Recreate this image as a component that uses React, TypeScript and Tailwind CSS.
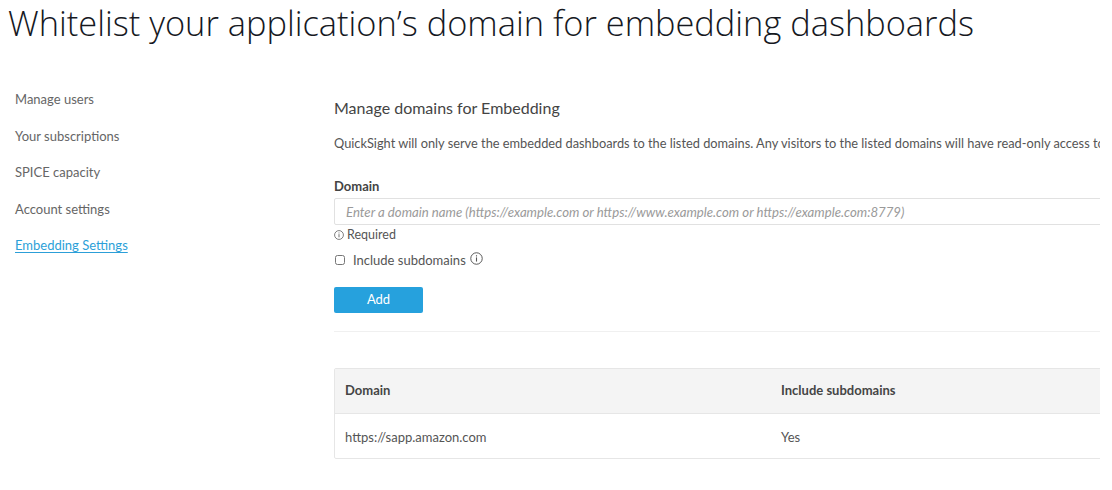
import { useState } from "react";

const navItems = [
  "Manage users",
  "Your subscriptions",
  "SPICE capacity",
  "Account settings",
  "Embedding Settings",
];

const domains = [{ domain: "https://sapp.amazon.com", subdomains: "Yes" }];

function InfoIcon({ size = 11 }: { size?: number }) {
  return (
    <svg width={size} height={size} viewBox="0 0 12 12" fill="none" className="shrink-0">
      <circle cx="6" cy="6" r="5.3" stroke="currentColor" strokeWidth="0.9" />
      <rect x="5.5" y="5" width="1" height="3.8" fill="currentColor" />
      <rect x="5.5" y="3" width="1" height="1.1" fill="currentColor" />
    </svg>
  );
}

export default function App() {
  const [value, setValue] = useState("");
  const [includeSub, setIncludeSub] = useState(false);

  return (
    <div className="w-[1112px] h-[490px] overflow-hidden bg-white font-['Lato',sans-serif] text-[#545b64]">
      <h1 className="pl-[8px] text-[34.4px] leading-[46px] font-light text-[#16191f] font-['Open_Sans',sans-serif]">
        Whitelist your application’s domain for embedding dashboards
      </h1>

      <div className="flex w-[1100px] overflow-hidden">
        <nav className="w-[334px] shrink-0 pl-[15px] pt-[44px] flex flex-col gap-[18px]">
          {navItems.map((item) => {
            const active = item === "Embedding Settings";
            return (
              <a
                key={item}
                href="#"
                className={
                  "text-[13px] leading-[18.5px] w-fit " +
                  (active ? "text-[#2c9fd8] underline underline-offset-2" : "text-[#666]")
                }
              >
                {item}
              </a>
            );
          })}
        </nav>

        <main className="w-[800px] shrink-0 pt-[51px]">
          <h2 className="text-[16px] leading-[22px] text-[#444]">Manage domains for Embedding</h2>
          <p className="mt-[15px] text-[12.8px] leading-[18px] whitespace-nowrap text-[#555]">
            QuickSight will only serve the embedded dashboards to the listed domains. Any visitors to the listed domains will have read-only access to all dashboards.
          </p>

          <label className="block mt-[25px] text-[13px] leading-[18px] font-bold text-[#444]">Domain</label>
          <input
            value={value}
            onChange={(e) => setValue(e.target.value)}
            placeholder="Enter a domain name (https://example.com or https://www.example.com or https://example.com:8779)"
            className="mt-[3px] block w-[800px] h-[27px] border border-[#e1e1e1] rounded-[2px] px-[11px] text-[13.2px] italic text-[#444] placeholder:text-[#9a9a9a] outline-none"
          />
          <div className="mt-[1px] flex items-center gap-[3px] text-[12.5px] leading-[17px] text-[#555]">
            <InfoIcon size={10} />
            <span>Required</span>
          </div>

          <label className="mt-[8px] flex items-center text-[13px] leading-[18px] text-[#555]">
            <input
              type="checkbox"
              checked={includeSub}
              onChange={(e) => setIncludeSub(e.target.checked)}
              className="ml-[1px] w-[10px] h-[10px] accent-[#2c9fd8]"
            />
            <span className="ml-[8px]">Include subdomains</span>
            <span className="ml-[4px] -mt-[4px]">
              <InfoIcon size={13} />
            </span>
          </label>

          <button className="mt-[18px] w-[89px] h-[26px] rounded-[2px] bg-[#26a1dd] text-white text-[13px]">
            Add
          </button>

          <div className="mt-[18px] h-px bg-[#f0f0f0]" />

          <div className="mt-[36px] border border-[#e6e6e6] rounded-[2px]">
            <div className="flex h-[45px] items-center bg-[#f4f4f4] border-b border-[#e6e6e6] text-[13px] font-bold text-[#454545]">
              <div className="w-[446px] pl-[10px]">Domain</div>
              <div>Include subdomains</div>
            </div>
            {domains.map((d) => (
              <div key={d.domain} className="flex h-[44px] items-center pt-[3px] text-[13px] text-[#555]">
                <div className="w-[446px] pl-[10px]">{d.domain}</div>
                <div>{d.subdomains}</div>
              </div>
            ))}
          </div>
        </main>
      </div>
    </div>
  );
}
